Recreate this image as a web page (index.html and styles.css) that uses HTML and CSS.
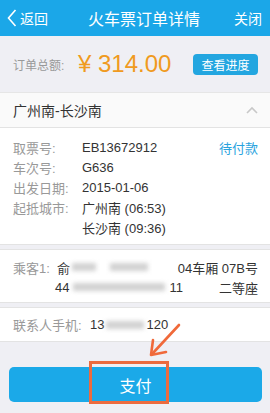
FILE: index.html
```html
<!DOCTYPE html>
<html lang="zh-CN">
<head>
    <meta charset="UTF-8">
    <meta name="viewport" content="width=device-width, initial-scale=1.0">
    <title>火车票订单详情</title>
    <link rel="stylesheet" href="styles.css">
</head>
<body>
    <header class="topbar">
        <div class="back">
            <svg class="back-icon" width="10" height="18" viewBox="0 0 10 18"><path d="M8.5 1 L1.5 9 L8.5 17" fill="none" stroke="#fff" stroke-width="1.6"/></svg>
            <span>返回</span>
        </div>
        <h1>火车票订单详情</h1>
        <div class="close">关闭</div>
    </header>

    <div class="total">
        <span class="total-label">订单总额:</span>
        <span class="total-price">¥ 314.00</span>
        <button class="progress-btn">查看进度</button>
    </div>

    <div class="route">
        <span>广州南-长沙南</span>
        <svg width="12" height="8" viewBox="0 0 12 8"><path d="M1 7 L6 2 L11 7" fill="none" stroke="#c8c8c8" stroke-width="1.6"/></svg>
    </div>

    <div class="detail">
        <div class="row">
            <span class="label">取票号:</span>
            <span class="value">EB13672912</span>
            <span class="status">待付款</span>
        </div>
        <div class="row">
            <span class="label">车次号:</span>
            <span class="value">G636</span>
        </div>
        <div class="row">
            <span class="label">出发日期:</span>
            <span class="value">2015-01-06</span>
        </div>
        <div class="row">
            <span class="label">起抵城市:</span>
            <span class="value">广州南 (06:53)</span>
        </div>
        <div class="row">
            <span class="label"></span>
            <span class="value">长沙南 (09:36)</span>
        </div>
    </div>

    <div class="passenger">
        <div class="prow">
            <span class="label">乘客1:</span>
            <span class="value">俞<span class="blur b1"></span><span class="blur b2"></span></span>
            <span class="seat">04车厢 07B号</span>
        </div>
        <div class="prow">
            <span class="id">44<span class="blur b3"></span>11</span>
            <span class="seat">二等座</span>
        </div>
    </div>

    <div class="contact">
        <span class="label">联系人手机:</span>
        <span class="value">13<span class="blur b4"></span>120</span>
    </div>

    <div class="pay-wrap">
        <button class="pay">支付</button>
        <div class="mark"></div>
        <svg class="arrow" width="40" height="40" viewBox="0 0 40 40"><path d="M34 4 L8 32" stroke="#f0693a" stroke-width="2.6" stroke-linecap="round"/><path d="M8 19 L6 34 L21 31" fill="none" stroke="#f0693a" stroke-width="2.6" stroke-linecap="round" stroke-linejoin="round"/></svg>
    </div>
</body>
</html>
```

FILE: styles.css
```css
body {
    margin: 0;
    background: #efeff4;
    font-family: "Liberation Sans", "Noto Sans CJK SC", sans-serif;
    color: #333;
    width: 270px;
    height: 413px;
    overflow: hidden;
}

.topbar {
    height: 36px;
    background: #1ba7e8;
    color: #fff;
    display: flex;
    align-items: center;
    justify-content: space-between;
    padding: 0 8px 0 7px;
}

.topbar h1 {
    font-size: 16px;
    font-weight: normal;
    margin: 0 0 0 6px;
}

.back {
    display: flex;
    align-items: center;
    gap: 3px;
    font-size: 14px;
}

.close {
    font-size: 14px;
}

.total {
    height: 56px;
    display: flex;
    align-items: center;
    padding: 0 12px 0 13px;
}

.total-label {
    font-size: 12px;
    color: #999;
    width: 65px;
}

.total-price {
    font-size: 24px;
    color: #f09a20;
    flex: 1;
}

.progress-btn {
    font: inherit;
    font-size: 12px;
    color: #fff;
    background: #23a6e0;
    border: none;
    border-radius: 4px;
    height: 21px;
    width: 65px;
    padding: 0;
}

.route {
    height: 34px;
    background: #fafafa;
    border-top: 1px solid #e6e6e6;
    border-bottom: 1px solid #e3e3e3;
    display: flex;
    align-items: center;
    justify-content: space-between;
    padding: 0 12px 0 13px;
    font-size: 14px;
}

.detail {
    background: #fff;
    padding: 9px 12px 7px 13px;
    border-bottom: 1px solid #e3e3e3;
}

.row {
    display: flex;
    height: 20px;
    align-items: center;
    font-size: 13px;
}

.label {
    color: #999;
    width: 69px;
    flex-shrink: 0;
}

.value {
    flex: 1;
    display: flex;
    align-items: center;
}

.status {
    color: #2aa3de;
}

.passenger {
    background: #fff;
    margin-top: 4px;
    border-top: 1px solid #e3e3e3;
    border-bottom: 1px solid #e3e3e3;
    padding: 7px 12px 5px 13px;
}

.prow {
    display: flex;
    align-items: center;
    height: 20px;
    font-size: 13px;
}

.passenger .label {
    width: 44px;
}

.id {
    flex: 1;
    padding-left: 42px;
    display: flex;
    align-items: center;
}

.blur {
    display: inline-block;
    height: 8px;
    background: #d2d2d2;
    filter: blur(2px);
}

.b1 { width: 24px; margin-left: 2px; }
.b2 { width: 38px; margin-left: 14px; }
.b3 { width: 92px; margin: 0 4px; }
.b4 { width: 38px; margin: 0 2px; }

.contact {
    background: #fff;
    margin-top: 4px;
    border-top: 1px solid #e3e3e3;
    border-bottom: 1px solid #e3e3e3;
    height: 33px;
    display: flex;
    align-items: center;
    padding: 0 13px;
    font-size: 13px;
}

.contact .label {
    width: 77px;
}

.pay-wrap {
    position: relative;
    padding: 25px 8px 0 9px;
}

.pay {
    width: 100%;
    height: 35px;
    border: none;
    border-radius: 5px;
    background: #1ba9e8;
    color: #fff;
    font: inherit;
    font-size: 16px;
}

.mark {
    position: absolute;
    left: 89px;
    top: 19px;
    width: 74px;
    height: 37px;
    border: 3px solid #ec6b3f;
}

.arrow {
    position: absolute;
    left: 145px;
    top: -21px;
}
```
